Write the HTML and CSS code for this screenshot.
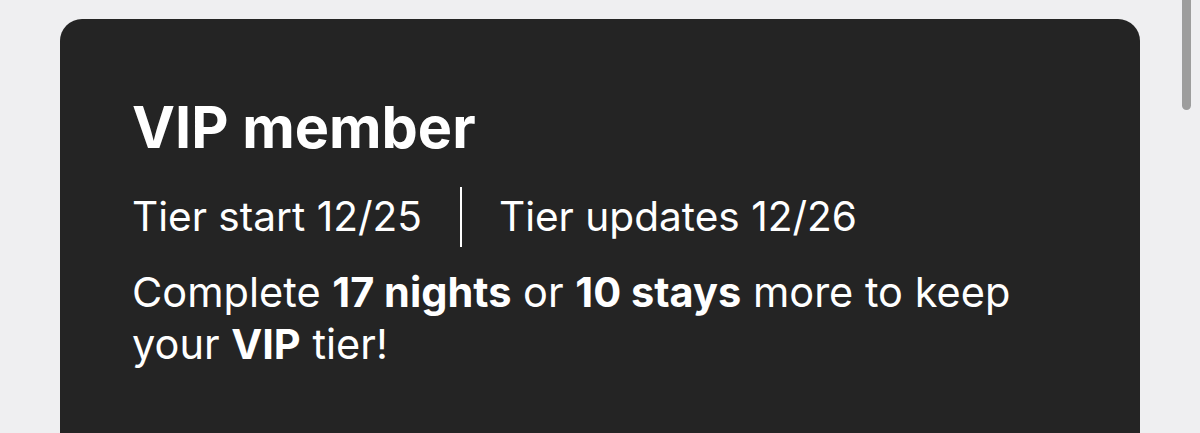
FILE: index.html
```html
<!DOCTYPE html>
<html>
<head>
<meta charset="utf-8">
<link rel="stylesheet" href="styles.css">
</head>
<body>
<div class="page">
  <section class="card">
    <h1 class="title">VIP member</h1>
    <div class="dates">
      <span class="date">Tier start 12/25</span>
      <span class="divider"></span>
      <span class="date">Tier updates 12/26</span>
    </div>
    <p class="note">Complete <b>17 nights</b> or <b>10 stays</b> more to keep your <b>VIP</b> tier!</p>
  </section>
</div>
<div class="scrollbar"></div>
</body>
</html>
```
FILE: styles.css
```css
html, body {
  margin: 0;
  padding: 0;
  height: 100%;
  overflow: hidden;
}
body {
  background: #efeff1;
  font-family: Inter, "Noto Sans", sans-serif;
  color: #ffffff;
}
.page {
  padding: 19px 60px 0 60px;
}
.card {
  background: #242424;
  border-radius: 22px;
  padding: 76px 100px 60px 72px;
  min-height: 520px;
  box-sizing: border-box;
}
.title {
  margin: 0;
  font-size: 57.6px;
  font-weight: 700;
  line-height: 64px;
}
.dates {
  display: flex;
  align-items: center;
  margin-top: 28px;
  font-size: 40.6px;
  line-height: 60px;
}
.divider {
  width: 2px;
  height: 60px;
  background: #ffffff;
  margin: 0 37px 0 38px;
}
.note {
  margin: 19px 0 0 0;
  font-size: 41.5px;
  line-height: 52px;
}
.note b {
  font-weight: 700;
}
.scrollbar {
  position: absolute;
  left: 1182px;
  top: 0;
  width: 9px;
  height: 110px;
  border-radius: 0 0 5px 5px;
  background: #9d9d9d;
}
```
